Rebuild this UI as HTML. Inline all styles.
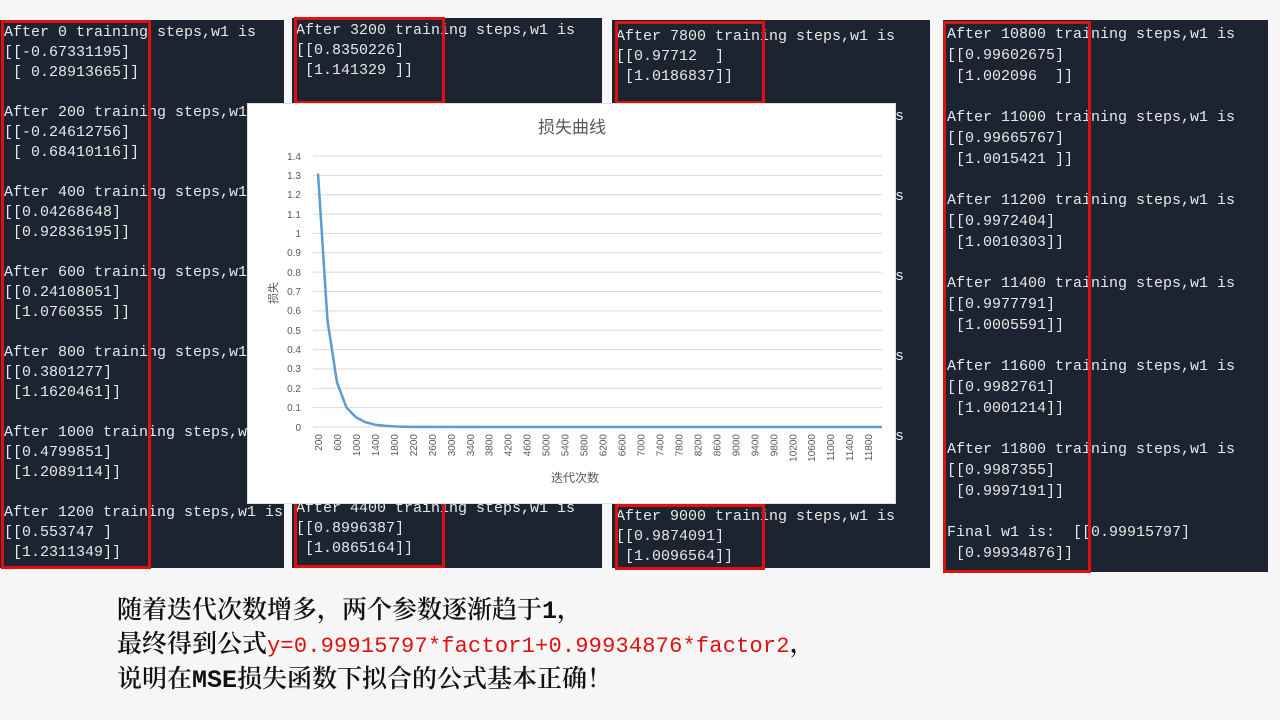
<!DOCTYPE html>
<html><head><meta charset="utf-8"><style>
body{margin:0;width:1280px;height:720px;background:#f6f6f6;position:relative;overflow:hidden;font-family:"Liberation Mono",monospace;}
.p{position:absolute;background:#1b2430;color:#e8e8e8;font-size:15px;white-space:pre;overflow:hidden;}
.p div{position:absolute;left:4px;line-height:20px}
.r{position:absolute;border:3px solid #e01010;box-sizing:border-box;}
.chart{position:absolute;left:247px;top:103px;width:649px;height:401px;background:#fff;border:1px solid #ddd;box-sizing:border-box}
.bt{position:absolute;left:117px;font-family:"Liberation Mono","Noto Serif CJK SC",serif;font-size:25px;font-weight:600;color:#111;line-height:34px;top:595px;white-space:nowrap}
.bt span{font-size:22px;letter-spacing:0.2px;font-weight:normal}
</style></head><body>
<div class="p" style="left:0;top:20px;width:284px;height:548px"><div style="top:3px">After 0 training steps,w1 is
[[-0.67331195]
 [ 0.28913665]]

After 200 training steps,w1 is
[[-0.24612756]
 [ 0.68410116]]

After 400 training steps,w1 is
[[0.04268648]
 [0.92836195]]

After 600 training steps,w1 is
[[0.24108051]
 [1.0760355 ]]

After 800 training steps,w1 is
[[0.3801277]
 [1.1620461]]

After 1000 training steps,w1 is
[[0.4799851]
 [1.2089114]]

After 1200 training steps,w1 is
[[0.553747 ]
 [1.2311349]]</div></div>
<div class="p" style="left:292px;top:18px;width:310px;height:550px"><div style="top:3px">After 3200 training steps,w1 is
[[0.8350226]
 [1.141329 ]]</div><div style="top:481px">After 4400 training steps,w1 is
[[0.8996387]
 [1.0865164]]</div></div>
<div class="p" style="left:612px;top:20px;width:318px;height:548px"><div style="top:7px;line-height:20px">After 7800 training steps,w1 is
[[0.97712  ]
 [1.0186837]]

                               s



                               s



                               s



                               s



                               s</div><div style="top:487px">After 9000 training steps,w1 is
[[0.9874091]
 [1.0096564]]</div></div>
<div class="p" style="left:943px;top:20px;width:325px;height:552px"><div style="top:5px;line-height:20.75px">After 10800 training steps,w1 is
[[0.99602675]
 [1.002096  ]]

After 11000 training steps,w1 is
[[0.99665767]
 [1.0015421 ]]

After 11200 training steps,w1 is
[[0.9972404]
 [1.0010303]]

After 11400 training steps,w1 is
[[0.9977791]
 [1.0005591]]

After 11600 training steps,w1 is
[[0.9982761]
 [1.0001214]]

After 11800 training steps,w1 is
[[0.9987355]
 [0.9997191]]

Final w1 is:  [[0.99915797]
 [0.99934876]]</div></div>
<div class="r" style="left:1px;top:20px;width:150px;height:549px"></div>
<div class="r" style="left:294px;top:17px;width:151px;height:87px"></div>
<div class="r" style="left:294px;top:499px;width:151px;height:69px"></div>
<div class="r" style="left:615px;top:21px;width:150px;height:83px"></div>
<div class="r" style="left:615px;top:504px;width:150px;height:66px"></div>
<div class="r" style="left:943px;top:21px;width:148px;height:552px"></div>
<div class="chart">
<svg width="649" height="401" style="position:absolute;left:-1px;top:-1px" font-family="Liberation Sans,Noto Sans CJK SC,sans-serif">
<text x="325" y="30" font-size="17" fill="#595959" text-anchor="middle">损失曲线</text>
<g stroke="#d9d9d9" stroke-width="1">
<line x1="66" x2="635" y1="53" y2="53"/><line x1="66" x2="635" y1="72.4" y2="72.4"/><line x1="66" x2="635" y1="91.7" y2="91.7"/><line x1="66" x2="635" y1="111.1" y2="111.1"/><line x1="66" x2="635" y1="130.4" y2="130.4"/><line x1="66" x2="635" y1="149.8" y2="149.8"/><line x1="66" x2="635" y1="169.1" y2="169.1"/><line x1="66" x2="635" y1="188.5" y2="188.5"/><line x1="66" x2="635" y1="207.9" y2="207.9"/><line x1="66" x2="635" y1="227.2" y2="227.2"/><line x1="66" x2="635" y1="246.6" y2="246.6"/><line x1="66" x2="635" y1="265.9" y2="265.9"/><line x1="66" x2="635" y1="285.3" y2="285.3"/><line x1="66" x2="635" y1="304.6" y2="304.6"/><line x1="66" x2="635" y1="324" y2="324"/>
</g>
<g font-size="10" fill="#595959" text-anchor="end">
<text x="54" y="57">1.4</text><text x="54" y="76">1.3</text><text x="54" y="95">1.2</text><text x="54" y="115">1.1</text><text x="54" y="134">1</text><text x="54" y="153">0.9</text><text x="54" y="173">0.8</text><text x="54" y="192">0.7</text><text x="54" y="211">0.6</text><text x="54" y="231">0.5</text><text x="54" y="250">0.4</text><text x="54" y="269">0.3</text><text x="54" y="289">0.2</text><text x="54" y="308">0.1</text><text x="54" y="328">0</text>
</g>
<text transform="translate(30,190) rotate(-90)" font-size="11" fill="#595959" text-anchor="middle">损失</text>
<text x="328" y="379" font-size="12" fill="#595959" text-anchor="middle">迭代次数</text>
<g font-size="10" fill="#595959" text-anchor="end" id="xl"></g>
<polyline fill="none" stroke="#5b9bd5" stroke-width="2.5" points="71,70.6 80.5,217.5 90,279.5 99.5,304.6 109,314.3 118.5,319.2 128,321.7 137.5,322.8 147,323.4 156.5,323.7 166,323.9 240,324 635,324"/>
</svg>
</div>
<script>
var g=document.getElementById('xl'),s='';
for(var i=0;i<30;i++){var v=200+i*400,x=71+i*18.97;s+='<text transform="translate('+(x+4)+',331) rotate(-90)">'+v+'</text>';}
g.innerHTML=s;
</script>
<div class="bt">随着迭代次数增多，两个参数逐渐趋于1，<br>最终得到公式<span style="color:#e01010">y=0.99915797*factor1+0.99934876*factor2</span>，<br>说明在MSE损失函数下拟合的公式基本正确！</div>
</body></html>
